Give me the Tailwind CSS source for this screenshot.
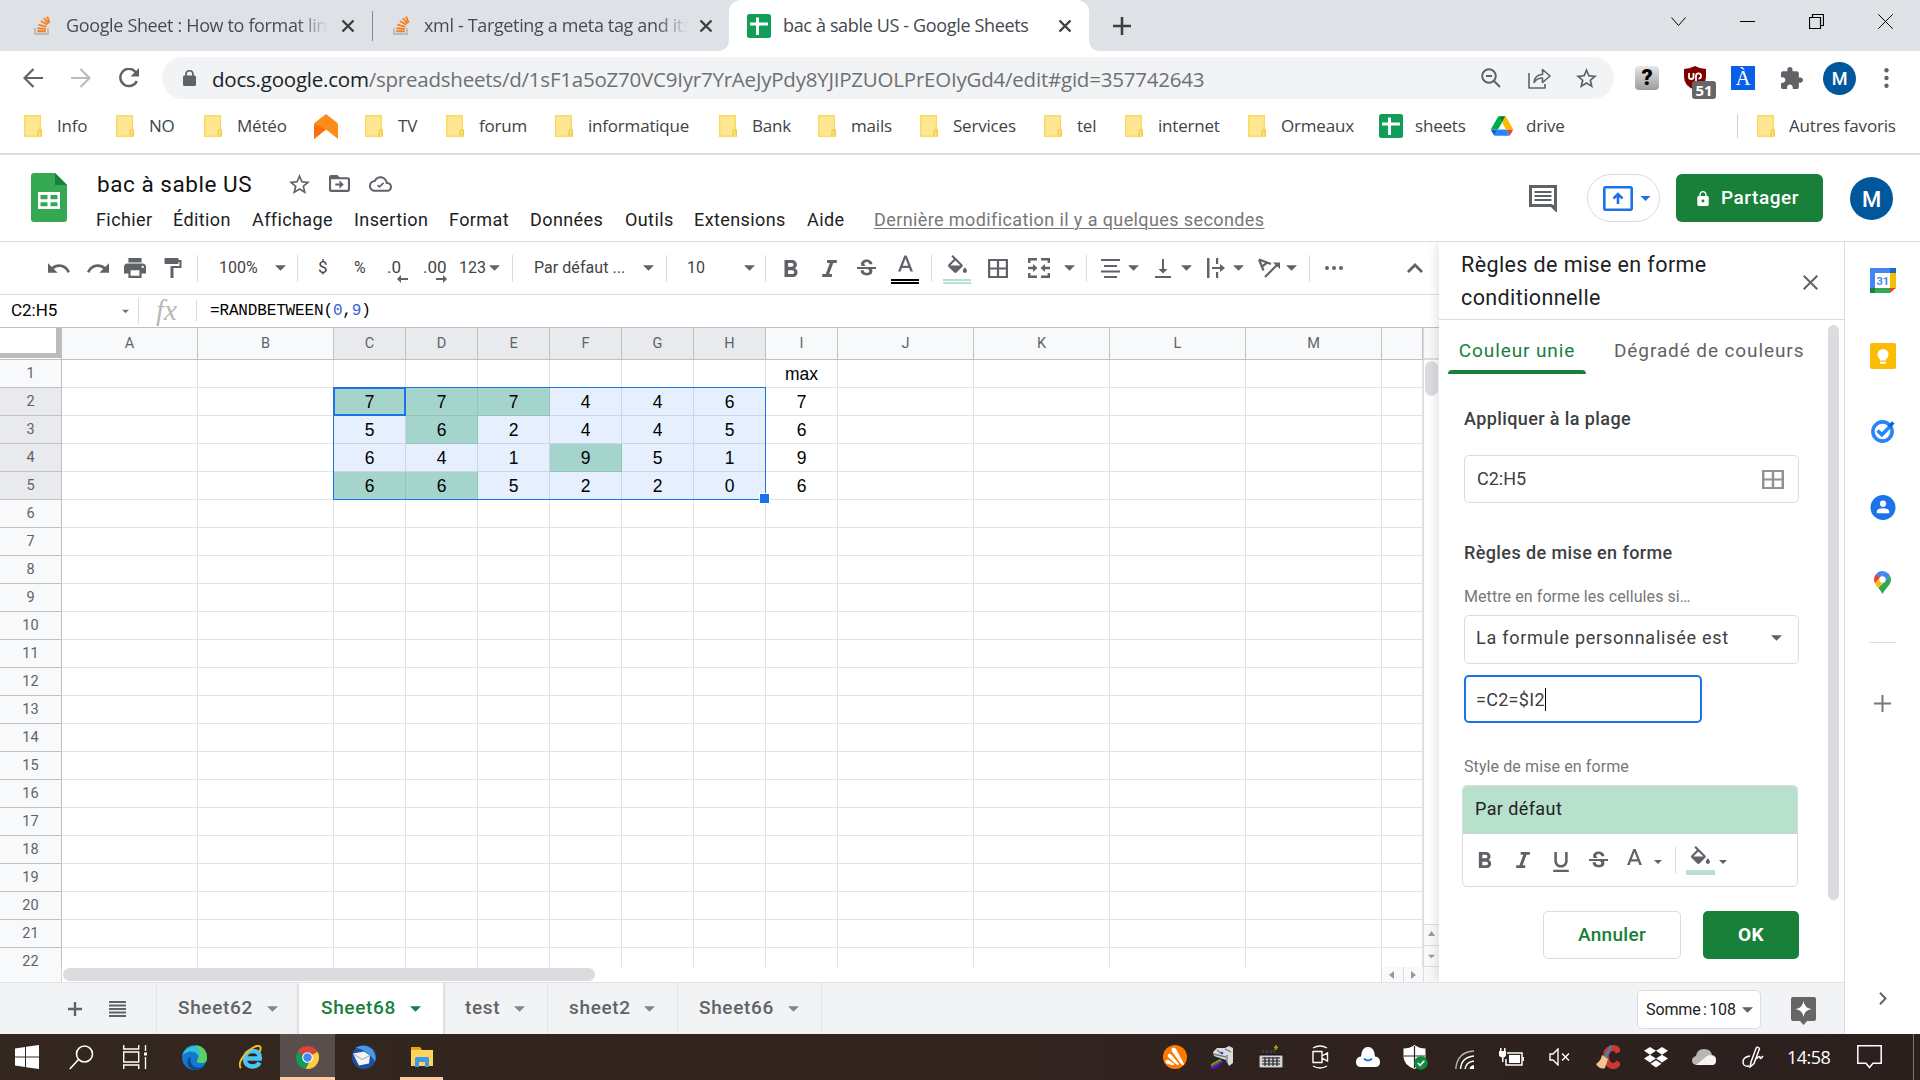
<!DOCTYPE html>
<html lang="fr">
<head>
    <meta charset="UTF-8">
    <meta name="viewport" content="width=device-width, initial-scale=1.0">
    <title>bac à sable US - Google Sheets</title>
    <script src="https://cdn.jsdelivr.net/npm/@tailwindcss/browser@4"></script>
</head>
<body class="w-[1920px] h-[1080px] overflow-hidden bg-white font-['Roboto',sans-serif] text-[#202124]">

    <!-- Shared icons -->
    <svg class="hidden">
        <symbol id="caret" viewBox="0 0 10 5"><path d="M0 0h10L5 5z"/></symbol>
        <symbol id="close" viewBox="0 0 14 14"><path d="M1.5 1.5l11 11M12.5 1.5l-11 11" fill="none" stroke="currentColor" stroke-width="2.4"/></symbol>
        <symbol id="star" viewBox="2 2 20 19"><path d="M22 9.24l-7.19-.62L12 2 9.19 8.63 2 9.24l5.46 4.73L5.82 21 12 17.27 18.18 21l-1.63-7.03L22 9.24zM12 15.4l-3.76 2.27 1-4.28-3.32-2.88 4.38-.38L12 6.1l1.71 4.04 4.38.38-3.32 2.88 1 4.28L12 15.4z"/></symbol>
        <symbol id="so" viewBox="0 0 17 19"><path d="M1 12v6h13v-6" fill="none" stroke="#bcbbbb" stroke-width="1.8"/><path d="M3.2 15.2h8.6M3.4 12.2l8.5.9M4.4 8.6l8 2.2M6.8 5l6.6 3.8M10 2.2l4.4 5.4M13.2.6l2.4 6.2" stroke="#f48024" stroke-width="1.9" fill="none"/></symbol>
        <symbol id="folder" viewBox="0 0 18 22"><path d="M.7.7h15.6v14.2h1v6.4H.7z" fill="#ffe693" stroke="#fad95f" stroke-width="1.4"/><path d="M14 21v-4.6q0-1.8 1.6-1.8t1.6 1.8V21" fill="#ffe07a" stroke="#e9c23c" stroke-width="1"/></symbol>
        <symbol id="gsheet" viewBox="0 0 24 24"><rect width="24" height="24" rx="2.5" fill="#109d58"/><path d="M10.5 3.500v17.500M3 10h18" stroke="#fff" stroke-width="3"/></symbol>
        <symbol id="bold" viewBox="7 4 10.75 14"><path d="M15.6 10.79c.97-.67 1.65-1.77 1.65-2.79 0-2.26-1.75-4-4-4H7v14h7.04c2.09 0 3.71-1.7 3.71-3.79 0-1.52-.86-2.82-2.15-3.42zM10 6.5h3c.83 0 1.5.67 1.5 1.5s-.67 1.5-1.5 1.5h-3v-3zm3.5 9H10v-3h3.5c.83 0 1.5.67 1.5 1.5s-.67 1.5-1.5 1.5z"/></symbol>
        <symbol id="italic" viewBox="6 4 12 14"><path d="M10 4v2.5h2.3L8.9 15.5H6V18h8v-2.5h-2.3l3.4-9H18V4z"/></symbol>
        <symbol id="strike" viewBox="3 3 18 16"><path d="M7.24 8.75c-.26-.48-.39-1.03-.39-1.67 0-.61.13-1.16.4-1.67.26-.5.63-.93 1.11-1.29.48-.35 1.05-.63 1.7-.83.66-.19 1.39-.29 2.18-.29.81 0 1.54.11 2.21.34.66.22 1.23.54 1.69.94.47.4.83.88 1.08 1.43.25.55.38 1.15.38 1.81h-3.01c0-.31-.05-.59-.15-.85-.09-.27-.24-.49-.44-.68-.2-.19-.45-.33-.75-.44-.3-.1-.66-.16-1.06-.16-.39 0-.74.04-1.03.13-.29.09-.53.21-.72.36-.19.16-.34.34-.44.55-.1.21-.15.43-.15.66 0 .48.25.88.74 1.21.38.25.77.48 1.41.7H7.39c-.05-.08-.11-.17-.15-.25zM21 12v-2H3v2h9.62c.18.07.4.14.55.2.37.17.66.34.87.51.21.17.35.36.43.57.07.2.11.43.11.69 0 .23-.05.45-.14.66-.09.2-.23.38-.42.53-.19.15-.42.26-.71.35-.29.08-.63.13-1.01.13-.43 0-.83-.04-1.18-.13s-.66-.23-.91-.42c-.25-.19-.45-.44-.59-.75-.14-.31-.25-.76-.25-1.21H6.4c0 .55.08 1.13.24 1.58.16.45.37.85.65 1.21.28.35.6.66.98.92.37.26.78.48 1.22.65.44.17.9.3 1.38.39.48.08.96.13 1.44.13.8 0 1.53-.09 2.18-.28s1.21-.45 1.67-.79c.46-.34.82-.77 1.07-1.27s.38-1.07.38-1.71c0-.6-.1-1.14-.31-1.61-.05-.11-.11-.23-.17-.33H21z"/></symbol>
        <symbol id="letter" viewBox="5.5 3 13 14"><path d="M11 3L5.5 17h2.25l1.12-3h6.25l1.12 3h2.25L13 3h-2zm-1.38 9L12 5.67 14.38 12H9.62z"/></symbol>
        <symbol id="fill" viewBox="3 0 18 17"><path d="M16.56 8.94L7.62 0 6.21 1.41l2.38 2.38-5.15 5.15c-.59.59-.59 1.54 0 2.12l5.5 5.5c.29.29.68.44 1.06.44s.77-.15 1.06-.44l5.5-5.5c.59-.58.59-1.53 0-2.12zM5.21 10L10 5.21 14.79 10H5.21zM19 11.5s-2 2.17-2 3.5c0 1.1.9 2 2 2s2-.9 2-2c0-1.33-2-3.5-2-3.5z"/></symbol>
        <symbol id="grid" viewBox="3 3 18 18" preserveAspectRatio="none"><path d="M3 3v18h18V3H3zm8 16H5v-6h6v6zm0-8H5V5h6v6zm8 8h-6v-6h6v6zm0-8h-6V5h6v6z"/></symbol>
    </svg>

    <!-- Tab strip -->
    <div class="flex items-center h-[51px] bg-[#dee1e6] font-['Open_Sans',sans-serif] text-[18px] tracking-[-0.35px] text-[#45494e]">
        <svg class="w-[17px] h-[19px] ml-[34px]"><use href="#so"/></svg>
        <div class="w-[262px] ml-[15px] overflow-hidden whitespace-nowrap bg-linear-to-r from-[#45494e] from-88% to-transparent bg-clip-text text-transparent">Google Sheet : How to format lin</div>
        <svg class="w-[14px] h-[14px] ml-[13px] text-[#3c4043]"><use href="#close"/></svg>
        <div class="w-px h-[30px] ml-[17px] bg-[#85888c]"></div>
        <svg class="w-[17px] h-[19px] ml-[20px]"><use href="#so"/></svg>
        <div class="w-[264px] ml-[14px] overflow-hidden whitespace-nowrap bg-linear-to-r from-[#45494e] from-88% to-transparent bg-clip-text text-transparent">xml - Targeting a meta tag and its</div>
        <svg class="w-[14px] h-[14px] ml-[11px] text-[#3c4043]"><use href="#close"/></svg>
        <svg class="w-[12px] h-[12px] ml-[4px] self-end" viewBox="0 0 12 12"><path d="M12 0v12H0Q12 12 12 0" fill="#fff"/></svg>
        <div class="flex items-center w-[360px] h-full bg-white rounded-t-xl">
            <svg class="w-[24px] h-[24px] ml-[18px]"><use href="#gsheet"/></svg>
            <div class="w-[264px] ml-[12px] whitespace-nowrap">bac à sable US - Google Sheets</div>
            <svg class="w-[14px] h-[14px] ml-[11px] text-[#3c4043]"><use href="#close"/></svg>
        </div>
        <svg class="w-[12px] h-[12px] self-end" viewBox="0 0 12 12"><path d="M0 0v12h12Q0 12 0 0" fill="#fff"/></svg>
        <svg class="w-[18px] h-[18px] ml-[12px]" viewBox="0 0 18 18"><path d="M9 0v18M0 9h18" stroke="#3c4043" stroke-width="2.6"/></svg>
        <div class="flex items-center justify-between w-[222px] h-[16px] ml-auto mr-[27px] mb-[8px]">
            <svg class="w-[15px] h-[9px]" viewBox="0 0 15 9"><path d="M.5.5l7 8 7-8" fill="none" stroke="#000"/></svg>
            <div class="w-[15px] h-px bg-black"></div>
            <svg class="w-[15px] h-[15px]" viewBox="0 0 15 15"><path d="M.5 3.5h11v11h-11zM3.5 3V.5h11v11h-3" fill="none" stroke="#000" stroke-width="1.2"/></svg>
            <svg class="w-[15px] h-[15px]" viewBox="0 0 15 15"><path d="M.3.3l14.4 14.4M14.7.3L.3 14.7" stroke="#000"/></svg>
        </div>
    </div>

    <!-- Address bar -->
    <div class="flex items-center h-[54px] bg-white">
        <svg class="w-[20px] h-[20px] ml-[23px]" viewBox="0 0 20 20"><path d="M20 10H2M10.5 1L1.5 10l9 9" fill="none" stroke="#5f6368" stroke-width="2.2"/></svg>
        <svg class="w-[20px] h-[20px] ml-[28px]" viewBox="0 0 20 20"><path d="M0 10h18M9.5 1l9 9-9 9" fill="none" stroke="#babcbe" stroke-width="2.2"/></svg>
        <svg class="w-[22px] h-[20px] ml-[27px]" viewBox="0 0 22 20"><path d="M17.6 4A8.6 8.6 0 1 0 18.8 13" fill="none" stroke="#5f6368" stroke-width="2.5"/><path d="M21 0v8.5h-8.5z" fill="#5f6368"/></svg>
        <div class="flex items-center w-[1452px] h-[42px] ml-[22px] bg-[#f1f3f4] rounded-full">
            <svg class="w-[13px] h-[16px] ml-[21px]" viewBox="0 0 13 16" fill="#5f6368"><path d="M0 7q0-1.5 1.5-1.5h10Q13 5.5 13 7v7.5q0 1.5-1.5 1.5h-10Q0 16 0 14.5z"/><path d="M3 6.5V4.2a3.5 3.5 0 0 1 7 0v2.3" fill="none" stroke="#5f6368" stroke-width="1.8"/></svg>
            <div class="w-[1250px] ml-[16px] mt-[2px] whitespace-nowrap font-['Open_Sans',sans-serif] text-[20.5px] tracking-[-0.22px] text-[#6c7075]"><span class="text-[#202124]">docs.google.com</span>/spreadsheets/d/1sF1a5oZ70VC9Iyr7YrAeJyPdy8YJIPZUOLPrEOIyGd4/edit#gid=357742643</div>
            <svg class="w-[20px] h-[20px] ml-[19px]" viewBox="0 0 20 20"><circle cx="8" cy="8" r="6.8" fill="none" stroke="#5f6368" stroke-width="2"/><path d="M12.8 12.8L19 19M5 8h6" stroke="#5f6368" stroke-width="2"/></svg>
            <svg class="w-[23px] h-[21px] ml-[27px]" viewBox="0 0 23 21"><path d="M1 5v15h16v-4M6 14.5Q7 6.5 14.5 6.5V1.5L22 8l-7.5 6.500V10Q9 10 6 14.5z" fill="none" stroke="#5f6368" stroke-width="1.6" stroke-linejoin="round"/></svg>
            <svg class="w-[21px] h-[20px] ml-[25px]" fill="#5f6368"><use href="#star"/></svg>
        </div>
        <div class="flex items-center justify-center w-[24px] h-[24px] ml-[21px] rounded bg-linear-to-b from-[#e8e8e8] to-[#9c9c9c] text-[22px] font-black leading-none text-black">?</div>
        <div class="relative w-[32px] h-[24px] ml-[25px]">
            <svg class="w-[22px] h-[24px]" viewBox="0 0 22 24"><path d="M11 0q5 2.8 11 3v8q0 9-11 13Q0 20 0 11V3q6-.2 11-3z" fill="#800000"/><path d="M5 7v4q0 2 2.2 2T9.500 11V7M12 16V10q0-2.600 2.500-2.600T17 10t-2.500 2.600" fill="none" stroke="#fff" stroke-width="1.8"/></svg>
            <div class="absolute left-[8px] top-[15px] w-[24px] h-[18px] rounded-[3px] bg-[#666] text-center text-[15px] font-bold leading-[19px] text-white font-['Open_Sans',sans-serif]">51</div>
        </div>
        <div class="w-[24px] h-[24px] ml-[15px] bg-[#0a5fe8] text-center text-[21px] leading-[25px] text-white font-['Liberation_Serif',serif]">À</div>
        <svg class="w-[22px] h-[22px] ml-[26px]" viewBox="2 1 21 21" fill="#5f6368"><path d="M20.5 11H19V7c0-1.1-.9-2-2-2h-4V3.5C13 2.12 11.88 1 10.5 1S8 2.12 8 3.5V5H4c-1.1 0-1.990.9-1.990 2v3.8H3.5c1.49 0 2.7 1.21 2.7 2.7s-1.21 2.7-2.7 2.7H2V20c0 1.1.9 2 2 2h3.8v-1.5c0-1.49 1.21-2.7 2.7-2.7 1.49 0 2.7 1.21 2.7 2.7V22H17c1.1 0 2-.9 2-2v-4h1.5c1.38 0 2.5-1.12 2.5-2.5S21.88 11 20.5 11z"/></svg>
        <div class="flex items-center justify-center w-[33px] h-[33px] ml-[20px] rounded-full bg-[#01579b] text-[18px] font-medium text-white">M</div>
        <svg class="w-[5px] h-[20px] ml-[28px]" viewBox="0 0 5 20" fill="#5f6368"><circle cx="2.5" cy="2.3" r="2.2"/><circle cx="2.5" cy="10" r="2.2"/><circle cx="2.5" cy="17.7" r="2.2"/></svg>
    </div>

    <!-- Bookmarks -->
    <div class="flex items-center h-[50px] pl-[24px] pb-[6px] border-b-2 border-[#dadce0] font-['Open_Sans',sans-serif] text-[17px] tracking-[-0.2px] text-[#3f4347]">
        <div class="flex items-center gap-[15px] w-[92px]"><svg class="w-[18px] h-[22px]"><use href="#folder"/></svg>Info</div>
        <div class="flex items-center gap-[15px] w-[88px]"><svg class="w-[18px] h-[22px]"><use href="#folder"/></svg>NO</div>
        <div class="flex items-center gap-[15px] w-[110px]"><svg class="w-[18px] h-[22px]"><use href="#folder"/></svg>Météo</div>
        <div class="w-[51px]"><svg class="w-[24px] h-[25px]" viewBox="0 0 24 25"><path d="M12 0l11 8.5q1 1 1 3V25L12 15.5 0 25V11.5q0-2 1-3z" fill="#ff8c1a"/><path d="M0 10v15l12-9.5z" fill="#ff6f0f"/></svg></div>
        <div class="flex items-center gap-[15px] w-[81px]"><svg class="w-[18px] h-[22px]"><use href="#folder"/></svg>TV</div>
        <div class="flex items-center gap-[15px] w-[109px]"><svg class="w-[18px] h-[22px]"><use href="#folder"/></svg>forum</div>
        <div class="flex items-center gap-[15px] w-[164px]"><svg class="w-[18px] h-[22px]"><use href="#folder"/></svg>informatique</div>
        <div class="flex items-center gap-[15px] w-[99px]"><svg class="w-[18px] h-[22px]"><use href="#folder"/></svg>Bank</div>
        <div class="flex items-center gap-[15px] w-[102px]"><svg class="w-[18px] h-[22px]"><use href="#folder"/></svg>mails</div>
        <div class="flex items-center gap-[15px] w-[124px]"><svg class="w-[18px] h-[22px]"><use href="#folder"/></svg>Services</div>
        <div class="flex items-center gap-[15px] w-[81px]"><svg class="w-[18px] h-[22px]"><use href="#folder"/></svg>tel</div>
        <div class="flex items-center gap-[15px] w-[123px]"><svg class="w-[18px] h-[22px]"><use href="#folder"/></svg>internet</div>
        <div class="flex items-center gap-[15px] w-[131px]"><svg class="w-[18px] h-[22px]"><use href="#folder"/></svg>Ormeaux</div>
        <div class="flex items-center gap-[12px] w-[112px]"><svg class="w-[24px] h-[24px]"><use href="#gsheet"/></svg>sheets</div>
        <div class="flex items-center gap-[13px]">
            <svg class="w-[22px] h-[20px]" viewBox="0 0 87.3 78"><path d="M6.6 66.85l3.85 6.65c.8 1.4 1.95 2.5 3.3 3.3l13.75-23.8H0c0 1.55.4 3.1 1.2 4.5z" fill="#0066da"/><path d="M43.65 25L29.9 1.2c-1.35.8-2.5 1.9-3.3 3.3L1.2 48.5A9 9 0 0 0 0 53h27.5z" fill="#00ac47"/><path d="M73.55 76.8c1.35-.8 2.5-1.9 3.3-3.3l9.25-16c.8-1.4 1.2-2.95 1.2-4.5H59.8z" fill="#ea4335"/><path d="M43.65 25L57.4 1.2C56.05.4 54.5 0 52.9 0H34.4c-1.6 0-3.15.45-4.5 1.2z" fill="#00832d"/><path d="M59.8 53H27.5L13.75 76.8c1.35.8 2.9 1.2 4.5 1.2h50.8c1.6 0 3.15-.45 4.5-1.2z" fill="#2684fc"/><path d="M73.4 26.5L60.7 4.5c-.8-1.4-1.95-2.5-3.3-3.3L43.65 25 59.8 53h27.45c0-1.55-.4-3.1-1.2-4.5z" fill="#ffba00"/></svg>drive
        </div>
        <div class="w-px h-[24px] ml-auto bg-[#cfd1d4]"></div>
        <div class="flex items-center gap-[14px] w-[163px] ml-[19px] whitespace-nowrap"><svg class="w-[18px] h-[22px]"><use href="#folder"/></svg>Autres favoris</div>
    </div>

    <!-- Document header -->
    <div class="flex h-[87px] border-b border-[#dadce0]">
        <svg class="w-[36px] h-[49px] ml-[31px] mt-[18px]" viewBox="0 0 36 49"><path d="M3 0h21l12 12v34q0 3-3 3H3q-3 0-3-3V3Q0 0 3 0z" fill="#34a853"/><path d="M24 0l12 12H24z" fill="#188038"/><path d="M7 19h22v17H7zM9.5 22v4.2h7V22zM19.5 22v4.2h7V22zM9.5 29.2v4h7v-4zM19.5 29.2v4h7v-4z" fill="#fff" fill-rule="evenodd"/></svg>
        <div class="ml-[29px]">
            <div class="flex items-center h-[26px] mt-[16px] fill-[#5f6368]">
                <div class="w-[193px] pl-[1px] pt-px text-[22.5px] tracking-[0.55px] leading-none text-[#111]">bac à sable US</div>
                <svg class="w-[21px] h-[20px] mb-px"><use href="#star"/></svg>
                <svg class="w-[21px] h-[17px] ml-[19px] mb-px" viewBox="2 4 20 16"><path d="M20 6h-8l-2-2H4c-1.1 0-2 .9-2 2v12c0 1.1.9 2 2 2h16c1.1 0 2-.9 2-2V8c0-1.1-.9-2-2-2zm0 12H4V8h16v10zM12 17l4-4-4-4v3H8v2h4v3z"/></svg>
                <svg class="w-[23px] h-[16px] ml-[19px] mb-px" viewBox="0 4 24 16"><path d="M19.35 10.04C18.67 6.59 15.64 4 12 4 9.11 4 6.6 5.64 5.35 8.04 2.34 8.36 0 10.91 0 14c0 3.31 2.69 6 6 6h13c2.76 0 5-2.24 5-5 0-2.64-2.05-4.78-4.65-4.96zM19 18H6c-2.21 0-4-1.79-4-4 0-2.05 1.53-3.76 3.56-3.97l1.07-.11.5-.95C8.08 7.14 9.94 6 12 6c2.62 0 4.88 1.86 5.39 4.43l.3 1.5 1.53.11c1.56.1 2.78 1.41 2.78 2.96 0 1.65-1.35 3-3 3z"/><path d="M11 16.3l-2.7-2.7 1.2-1.2 1.5 1.5 3.6-3.6 1.2 1.2z"/></svg>
            </div>
            <div class="flex mt-[11px] text-[18px] tracking-[0.4px] leading-[24px] whitespace-nowrap">
                <div class="w-[77px]">Fichier</div>
                <div class="w-[79px]">Édition</div>
                <div class="w-[102px]">Affichage</div>
                <div class="w-[95px]">Insertion</div>
                <div class="w-[81px]">Format</div>
                <div class="w-[95px]">Données</div>
                <div class="w-[69px]">Outils</div>
                <div class="w-[113px]">Extensions</div>
                <div class="w-[67px]">Aide</div>
                <div class="text-[#777] underline decoration-1 underline-offset-2">Dernière modification il y a quelques secondes</div>
            </div>
        </div>
        <div class="flex items-center h-[48px] ml-auto mt-[19px] mr-[27px]">
            <svg class="w-[28px] h-[27px]" viewBox="0 0 28 27"><path d="M1.5 1.5h25v23l-4-4h-21z" fill="none" stroke="#5f6368" stroke-width="3"/><path d="M5.5 7h17M5.5 11h17M5.5 15h17" stroke="#5f6368" stroke-width="2"/><path d="M21 20h7v7z" fill="#5f6368"/></svg>
            <div class="flex items-center w-[73px] h-[48px] ml-[30px] border border-[#dadce0] rounded-full">
                <svg class="w-[30px] h-[25px] ml-[15px]" viewBox="0 0 30 25"><rect x="1.3" y="1.3" width="27.4" height="22.4" rx="1.5" fill="none" stroke="#1a73e8" stroke-width="2.6"/><path d="M15 18V8.5M10.5 12.5L15 8l4.5 4.5" fill="none" stroke="#1a73e8" stroke-width="2.6"/></svg>
                <svg class="w-[11px] h-[5px] ml-[7px] fill-[#1a73e8]"><use href="#caret"/></svg>
            </div>
            <div class="flex items-center w-[147px] h-[48px] ml-[16px] rounded-md bg-[#188038] text-white">
                <svg class="w-[12px] h-[15px] ml-[21px]" viewBox="4 1 16 21" fill="#fff"><path d="M18 8h-1V6c0-2.76-2.24-5-5-5S7 3.24 7 6v2H6c-1.1 0-2 .9-2 2v10c0 1.1.9 2 2 2h12c1.1 0 2-.9 2-2V10c0-1.1-.9-2-2-2zm-6 9c-1.1 0-2-.9-2-2s.9-2 2-2 2 .9 2 2-.9 2-2 2zm3.1-9H8.9V6c0-1.71 1.39-3.1 3.1-3.1 1.71 0 3.1 1.39 3.1 3.1v2z"/></svg>
                <div class="ml-[12px] text-[19px] font-medium tracking-[0.55px]">Partager</div>
            </div>
            <div class="flex items-center justify-center w-[43px] h-[43px] ml-[27px] rounded-full bg-[#01579b] pt-[3px] text-[22px] font-medium text-white">M</div>
        </div>
    </div>

    <div class="flex h-[792px]">
        <div class="w-[1844px]">
            <div class="flex h-[740px]">

                <!-- Sheet -->
                <div class="w-[1439px]">
                    <!-- Toolbar -->
                    <div class="flex items-center h-[53px] pl-[48px] border-b border-[#dadce0] text-[16px] text-[#444] fill-[#5f6368] stroke-none whitespace-nowrap">
                        <div class="w-[39px]"><svg class="w-[22px] h-[10px]" viewBox="2 7 20.5 9"><path d="M12.5 8c-2.65 0-5.05.99-6.9 2.6L2 7v9h9l-3.62-3.62c1.39-1.16 3.16-1.88 5.12-1.88 3.54 0 6.55 2.31 7.6 5.5l2.37-.78C21.08 11.03 17.15 8 12.5 8z"/></svg></div>
                        <div class="w-[37px]"><svg class="w-[22px] h-[10px]" viewBox="1.5 7 20.5 9"><path d="M18.4 10.6C16.55 8.99 14.15 8 11.5 8c-4.65 0-8.58 3.03-9.96 7.22L3.9 16c1.05-3.19 4.05-5.5 7.6-5.5 1.95 0 3.73.72 5.12 1.88L13 16h9V7l-3.6 3.6z"/></svg></div>
                        <div class="w-[40px]"><svg class="w-[22px] h-[20px]" viewBox="2 3 20 18"><path d="M19 8H5c-1.66 0-3 1.34-3 3v6h4v4h12v-4h4v-6c0-1.66-1.34-3-3-3zm-3 11H8v-5h8v5zm3-7c-.55 0-1-.45-1-1s.45-1 1-1 1 .45 1 1-.45 1-1 1zm-1-9H6v4h12V3z"/></svg></div>
                        <div class="w-[33px]"><svg class="w-[18px] h-[20px]" viewBox="4 2 17 20"><path d="M18 4V3c0-.55-.45-1-1-1H5c-.55 0-1 .45-1 1v4c0 .55.45 1 1 1h12c.55 0 1-.45 1-1V6h1v4H10v11c0 .55 0 1 0 1h3c0 0 0-.45 0-1v-9h8V4h-3z"/></svg></div>
                        <div class="w-[22px]"><div class="w-px h-[27px] bg-[#dadce0]"></div></div>
                        <div class="w-[56px]">100%</div>
                        <div class="w-[22px]"><svg class="w-[11px] h-[6px]"><use href="#caret"/></svg></div>
                        <div class="w-[21px]"><div class="w-px h-[27px] bg-[#dadce0]"></div></div>
                        <div class="w-[36px] text-[17px]">$</div>
                        <div class="w-[33px]">%</div>
                        <div class="relative w-[36px] text-[17px]">.0<svg class="absolute left-[10px] top-[20px] w-[11px] h-[8px]" viewBox="0 0 11 8"><path d="M4 0v3h7v2H4v3L0 4z"/></svg></div>
                        <div class="relative w-[36px] text-[17px]">.00<svg class="absolute left-[13px] top-[20px] w-[11px] h-[8px]" viewBox="0 0 11 8"><path d="M7 0v3H0v2h7v3l4-4z"/></svg></div>
                        <div class="w-[30px]">123</div>
                        <div class="w-[23px]"><svg class="w-[11px] h-[6px]"><use href="#caret"/></svg></div>
                        <div class="w-[22px]"><div class="w-px h-[27px] bg-[#dadce0]"></div></div>
                        <div class="w-[109px] tracking-[0.05px]">Par défaut ...</div>
                        <div class="w-[23px]"><svg class="w-[11px] h-[6px]"><use href="#caret"/></svg></div>
                        <div class="w-[21px]"><div class="w-px h-[27px] bg-[#dadce0]"></div></div>
                        <div class="w-[57px]">10</div>
                        <div class="w-[21px]"><svg class="w-[11px] h-[6px]"><use href="#caret"/></svg></div>
                        <div class="w-[19px]"><div class="w-px h-[27px] bg-[#dadce0]"></div></div>
                        <div class="w-[37px]"><svg class="w-[14px] h-[17px]"><use href="#bold"/></svg></div>
                        <div class="w-[36px]"><svg class="w-[17px] h-[17px]"><use href="#italic"/></svg></div>
                        <div class="w-[34px]"><svg class="w-[19px] h-[18px]"><use href="#strike"/></svg></div>
                        <div class="flex flex-col items-center w-[28px] mr-[12px] pt-[2px]">
                            <svg class="w-[15px] h-[17px]"><use href="#letter"/></svg>
                            <div class="w-[28px] h-[5px] mt-[7px] border-y-2 border-black"></div>
                        </div>
                        <div class="w-[12px]"><div class="w-px h-[27px] bg-[#dadce0]"></div></div>
                        <div class="flex flex-col items-center w-[28px] mr-[17px] pt-[2px]">
                            <svg class="w-[19px] h-[18px]"><use href="#fill"/></svg>
                            <div class="w-[28px] h-[5px] mt-[6px] border-y-2 border-[#b7e1cd]"></div>
                        </div>
                        <div class="w-[40px]"><svg class="w-[20px] h-[19px]"><use href="#grid"/></svg></div>
                        <div class="w-[36px]"><svg class="w-[22px] h-[20px]" viewBox="0 0 22 20"><path d="M1.2 5V1.2H9M13 1.2h7.8V5M1.2 15v3.8H9M13 18.8h7.8V15M0 10h6M22 10h-6" fill="none" stroke="#5f6368" stroke-width="2.4"/><path d="M5 6l4.5 4L5 14zM17 6l-4.5 4 4.5 4z"/></svg></div>
                        <div class="w-[22px]"><svg class="w-[11px] h-[6px]"><use href="#caret"/></svg></div>
                        <div class="w-[15px]"><div class="w-px h-[27px] bg-[#dadce0]"></div></div>
                        <div class="w-[27px]"><svg class="w-[19px] h-[19px]" viewBox="0 0 19 19"><path d="M0 0h19v2H0zM3 6h13v2H3zM0 11.5h19v2H0zM3 17h13v2H3z"/></svg></div>
                        <div class="w-[27px]"><svg class="w-[11px] h-[6px]"><use href="#caret"/></svg></div>
                        <div class="w-[26px]"><svg class="w-[16px] h-[19px]" viewBox="0 0 16 19"><path d="M0 17h16v2H0zM7 0h2v10h3.5L8 14.5 3.5 10H7z"/></svg></div>
                        <div class="w-[26px]"><svg class="w-[11px] h-[6px]"><use href="#caret"/></svg></div>
                        <div class="w-[26px]"><svg class="w-[18px] h-[20px]" viewBox="0 0 18 20"><path d="M0 0h2.5v20H0zM9 0h2.2v6H9zM9 14h2.2v6H9zM5 9h8V6l5 4-5 4v-3H5z"/></svg></div>
                        <div class="w-[25px]"><svg class="w-[11px] h-[6px]"><use href="#caret"/></svg></div>
                        <div class="w-[28px]"><svg class="w-[22px] h-[20px]" viewBox="0 0 22 20"><path d="M1 1.5l4.5 11M1 1.5l12 4.5M3.600 8.8l6-4.5M7 19L19 7" fill="none" stroke="#5f6368" stroke-width="2.2"/><path d="M15 4.5h7V11z"/></svg></div>
                        <div class="w-[23px]"><svg class="w-[11px] h-[6px]"><use href="#caret"/></svg></div>
                        <div class="w-[16px]"><div class="w-px h-[27px] bg-[#dadce0]"></div></div>
                        <div class="w-[82px]"><svg class="w-[18px] h-[4px]" viewBox="0 0 18 4"><circle cx="2" cy="2" r="2"/><circle cx="9" cy="2" r="2"/><circle cx="16" cy="2" r="2"/></svg></div>
                        <svg class="w-[16px] h-[10px]" viewBox="0 0 16 10"><path d="M1 9l7-7 7 7" fill="none" stroke="#5f6368" stroke-width="2.8"/></svg>
                    </div>

                    <!-- Formula bar -->
                    <div class="flex items-center h-[33px] border-b border-[#c0c0c0]">
                        <div class="w-[111px] pl-[11px] text-[17px] text-black">C2:H5</div>
                        <svg class="w-[7px] h-[5px] ml-[11px] fill-[#777]"><use href="#caret"/></svg>
                        <div class="w-px h-[26px] ml-[9px] bg-[#dadce0]"></div>
                        <div class="w-[40px] ml-[17px] pb-[3px] text-[29px] italic leading-[30px] text-[#b8b8b8] font-['Liberation_Serif',serif]">fx</div>
                        <div class="w-px h-[22px] bg-[#dadce0]"></div>
                        <div class="ml-[13px] text-[16px] tracking-[-0.15px] text-black font-['Liberation_Mono',monospace]">=RANDBETWEEN(<span class="text-[#3a5fd9]">0</span>,<span class="text-[#3a5fd9]">9</span>)</div>
                    </div>

                    <div class="flex h-[654px]">
                        <div class="w-[1423px]">
                            <!-- Cells -->
                            <div class="relative h-[639px] overflow-hidden">
                                <div id="colHeads" class="flex h-[32px]"></div>
                                <div id="rows"></div>
                                <div class="absolute left-[333px] top-[59px] w-[433px] h-[113px] border border-[#1a73e8]"></div>
                                <div class="absolute left-[333px] top-[59px] w-[73px] h-[29px] border-2 border-[#1a73e8]"></div>
                                <div class="absolute left-[759px] top-[165px] w-[11px] h-[11px] bg-[#1a73e8] border border-white"></div>
                            </div>
                            <!-- Horizontal scrollbar -->
                            <div class="flex h-[15px]">
                                <div class="w-[62px] bg-[#f8f9fa] border-r border-[#d5d5d5]"></div>
                                <div class="w-[532px] h-[13px] mt-px ml-px rounded-full bg-[#dadce0]"></div>
                                <div class="flex items-center justify-center w-[22px] ml-auto pr-[3px] bg-[#f8f9fa] border-l border-[#dadce0]"><svg class="w-[5px] h-[8px]" viewBox="0 0 5 8"><path d="M5 0v8L0 4z" fill="#999"/></svg></div>
                                <div class="flex items-center justify-center w-[20px] bg-[#f8f9fa] border-l border-[#dadce0]"><svg class="w-[5px] h-[8px]" viewBox="0 0 5 8"><path d="M0 0v8l5-4z" fill="#999"/></svg></div>
                            </div>
                        </div>
                        <!-- Vertical scrollbar -->
                        <div class="flex flex-col w-[16px] border-l border-[#dadce0]">
                            <div class="h-[32px] bg-[#f8f8f8] border-b-2 border-[#dadce0]"></div>
                            <div class="w-[13px] h-[35px] ml-px mt-px rounded-full bg-[#dadce0]"></div>
                            <div class="flex items-center justify-center h-[21px] mt-auto pb-[3px] bg-[#f8f9fa] border-t border-[#dadce0]"><svg class="w-[7px] h-[5px]" viewBox="0 0 7 5"><path d="M0 5h7L3.5 0z" fill="#999"/></svg></div>
                            <div class="flex items-center justify-center h-[21px] bg-[#f8f9fa] border-t border-[#dadce0]"><svg class="w-[7px] h-[5px]" fill="#999"><use href="#caret"/></svg></div>
                            <div class="h-[16px] bg-[#f8f8f8] border-t border-[#dadce0]"></div>
                        </div>
                    </div>
                </div>

                <!-- Conditional formatting panel -->
                <div class="relative w-[405px] bg-white shadow-[-1px_0_10px_rgba(60,64,67,0.18)] [clip-path:inset(0_0_0_-12px)]">
                    <div class="flex items-center h-[78px] pl-[22px] border-b border-[#dadce0]">
                        <div class="w-[342px] text-[21.5px] tracking-[0.4px] leading-[33px]">Règles de mise en forme<br>conditionnelle</div>
                        <svg class="w-[15px] h-[15px] mt-[3px]" viewBox="0 0 15 15"><path d="M.7.7l13.6 13.6M14.3.7L.7 14.3" stroke="#5f6368" stroke-width="2"/></svg>
                    </div>
                    <div class="flex pl-[9px] h-[54px] pt-[8px] text-[19px] tracking-[0.9px] text-[#5f6368] whitespace-nowrap">
                        <div class="flex items-center justify-center w-[138px] text-[#188038]"><span>Couleur unie</span></div>
                        <div class="flex items-center ml-[28px]">Dégradé de couleurs</div>
                    </div>
                    <div class="w-[138px] h-[4px] -mt-[4px] ml-[9px] rounded-t bg-[#188038]"></div>

                    <div class="pl-[25px] w-[360px]">
                        <div class="h-[24px] mt-[33px] text-[18px] font-medium leading-[24px] tracking-[0.4px] text-[#3c4043]">Appliquer à la plage</div>
                        <div class="flex items-center justify-between w-[335px] h-[48px] mt-[24px] pl-[12px] pr-[14px] border border-[#dadce0] rounded-[5px] text-[18px] text-[#3c4043]"><span class="pb-[2px]">C2:H5</span><svg class="w-[22px] h-[19px] fill-[#8f9296]"><use href="#grid"/></svg></div>
                        <div class="h-[24px] mt-[38px] text-[18px] font-medium leading-[24px] tracking-[0.4px] text-[#3c4043]">Règles de mise en forme</div>
                        <div class="h-[20px] mt-[22px] text-[16px] leading-[20px] tracking-[0.08px] text-[#777]">Mettre en forme les cellules si…</div>
                        <div class="flex items-center justify-between w-[335px] h-[49px] mt-[8px] pl-[11px] pr-[16px] pb-[3px] border border-[#dadce0] rounded-[5px] text-[18px] tracking-[0.75px] text-[#3c4043]"><span class="pb-[2px]">La formule personnalisée est</span><svg class="w-[11px] h-[6px] fill-[#5f6368]"><use href="#caret"/></svg></div>
                        <div class="flex items-center w-[238px] h-[48px] mt-[11px] pl-[10px] border-2 border-[#1a73e8] rounded-[5px] text-[18px] tracking-[0.3px] text-[#3c4043]">=C2=$I2<div class="w-px h-[23px] bg-black"></div></div>
                        <div class="h-[20px] mt-[34px] text-[16px] leading-[20px] tracking-[0.1px] text-[#777]">Style de mise en forme</div>
                    </div>
                    <div class="w-[336px] h-[102px] mt-[8px] ml-[23px] border border-[#dadce0] rounded-[5px] overflow-hidden">
                        <div class="h-[48px] pl-[12px] text-[18px] leading-[46px] tracking-[0.4px] bg-[#b7e1cd] border-b border-[#c5d5cc]">Par défaut</div>
                        <div class="flex items-center h-[52px] pl-[15px] fill-[#5f6368]">
                            <div class="w-[37px]"><svg class="w-[14px] h-[16px]"><use href="#bold"/></svg></div>
                            <div class="w-[38px]"><svg class="w-[16px] h-[16px]"><use href="#italic"/></svg></div>
                            <div class="w-[36px]"><svg class="w-[16px] h-[20px] mt-[3px]" viewBox="5 3 14 18"><path d="M12 17c3.31 0 6-2.69 6-6V3h-2.3v8c0 2-1.6 3.7-3.7 3.7S8.3 13 8.3 11V3H6v8c0 3.31 2.69 6 6 6zm-7 2v2h14v-2H5z"/></svg></div>
                            <div class="w-[38px]"><svg class="w-[19px] h-[18px]"><use href="#strike"/></svg></div>
                            <div class="w-[27px] pb-[7px]"><svg class="w-[15px] h-[16px]"><use href="#letter"/></svg></div>
                            <div class="w-[21px] pt-[4px]"><svg class="w-[8px] h-[4px]"><use href="#caret"/></svg></div>
                            <div class="w-[11px]"><div class="w-px h-[27px] bg-[#dadce0]"></div></div>
                            <div class="flex flex-col items-center w-[29px] mr-[4px]"><svg class="w-[19px] h-[18px]"><use href="#fill"/></svg><div class="w-[29px] h-[5px] mt-[6px] bg-[#b7e1cd]"></div></div>
                            <div class="pt-[4px]"><svg class="w-[8px] h-[4px]"><use href="#caret"/></svg></div>
                        </div>
                    </div>
                    <div class="flex justify-end gap-[22px] mt-[24px] pr-[45px] text-[19px] font-medium tracking-[0.3px]">
                        <div class="flex items-center justify-center w-[138px] h-[48px] border border-[#dadce0] rounded-[5px] text-[#188038]">Annuler</div>
                        <div class="flex items-center justify-center w-[96px] h-[48px] rounded-[5px] bg-[#188038] text-white font-bold">OK</div>
                    </div>
                    <div class="absolute left-[389px] top-[83px] w-[11px] h-[575px] rounded-full bg-[#dadce0]"></div>
                </div>
            </div>

            <!-- Sheet tabs -->
            <div class="relative flex items-center h-[52px] bg-[#f1f3f4] border-t border-[#e0e2e5] text-[19px] font-medium tracking-[0.65px] text-[#5f6368]">
                <svg class="w-[14px] h-[14px] ml-[68px]" viewBox="0 0 14 14"><path d="M7 0v14M0 7h14" stroke="#5f6368" stroke-width="2.4"/></svg>
                <svg class="w-[17px] h-[16px] ml-[27px]" viewBox="0 0 17 16" fill="#5f6368"><path d="M0 0h17v2H0zM0 3.5h17v2H0zM0 7h17v2H0zM0 10.5h17v2H0zM0 14h17v2H0z"/></svg>
                <div class="flex items-center w-[143px] h-full ml-[30px] pl-[21px] border-l border-[#e3e5e8]"><div class="w-[89px]">Sheet62</div><svg class="w-[11px] h-[6px] fill-[#80868b]"><use href="#caret"/></svg></div>
                <div class="flex items-center w-[144px] h-full pl-[22px] bg-white text-[#188038] shadow-[0_1px_3px_1px_rgba(60,64,67,0.2)] [clip-path:inset(0_-4px)]"><div class="w-[89px]">Sheet68</div><svg class="w-[11px] h-[6px] fill-[#188038]"><use href="#caret"/></svg></div>
                <div class="flex items-center w-[104px] h-full pl-[22px]"><div class="w-[49px]">test</div><svg class="w-[11px] h-[6px] fill-[#80868b]"><use href="#caret"/></svg></div>
                <div class="flex items-center w-[130px] h-full pl-[21px] border-l border-[#e3e5e8]"><div class="w-[75px]">sheet2</div><svg class="w-[11px] h-[6px] fill-[#80868b]"><use href="#caret"/></svg></div>
                <div class="flex items-center w-[145px] h-full pl-[21px] border-x border-[#e3e5e8]"><div class="w-[89px]">Sheet66</div><svg class="w-[11px] h-[6px] fill-[#80868b]"><use href="#caret"/></svg></div>
                <div class="flex items-center justify-between w-[124px] h-[39px] ml-auto mt-[2px] pl-[8px] pr-[7px] border border-[#dadce0] rounded-[5px] bg-white text-[16px] font-normal tracking-[-0.1px] text-[#202124]"><span class="pt-px [word-spacing:-1.5px]">Somme : 108</span><svg class="w-[11px] h-[6px] fill-[#5f6368]"><use href="#caret"/></svg></div>
                <svg class="w-[25px] h-[28px] ml-[30px] mr-[28px] mt-[4px]" viewBox="0 0 25 28"><path d="M2 0h21q2 0 2 2v20q0 2-2 2h-7l-3.5 4L9 24H2q-2 0-2-2V2Q0 0 2 0z" fill="#666"/><path d="M12.5 4q1 7 8 8-7 1-8 8-1-7-8-8 7-1 8-8z" fill="#fff"/></svg>
            </div>
        </div>

        <!-- Side rail -->
        <div class="relative flex flex-col items-center w-[76px] pt-[26px] border-l border-[#dadce0]">
            <svg class="w-[26px] h-[25px]" viewBox="0 0 26 25"><path d="M0 0h20v5H5v15H0z" fill="#4285f4"/><path d="M20 0h6v5h-6z" fill="#1967d2"/><path d="M20 5h6v15h-6z" fill="#fbbc04"/><path d="M5 20h15v5H5z" fill="#34a853"/><path d="M0 20h5v5H0z" fill="#188038"/><path d="M20 20h6l-6 5z" fill="#ea4335"/><path d="M5 5h15v15H5z" fill="#fff"/><text x="12.7" y="16.5" text-anchor="middle" font-family="Roboto" font-size="11" font-weight="700" fill="#4285f4">31</text></svg>
            <svg class="w-[26px] h-[26px] mt-[50px]" viewBox="0 0 26 26"><rect width="26" height="26" rx="2" fill="#fbbc04"/><circle cx="13" cy="11.5" r="5.5" fill="#fff"/><path d="M10 14h6v3.5h-6zM10 18.7h6v2h-6z" fill="#fff"/></svg>
            <svg class="w-[24px] h-[23px] mt-[51px]" viewBox="0 0 24 23"><circle cx="11.5" cy="11.5" r="9.6" fill="none" stroke="#2684fc" stroke-width="3.6"/><path d="M6.5 10.5l4.3 4.3L20 5.5" fill="none" stroke="#2684fc" stroke-width="3.6"/><path d="M17 5.5l4-4.2 2.6 2.2-4.2 4.3z" fill="#0066da"/></svg>
            <svg class="w-[26px] h-[25px] mt-[52px]" viewBox="0 0 26 26"><circle cx="13" cy="13" r="13" fill="#1a73e8"/><circle cx="13" cy="9" r="3.2" fill="#fff"/><path d="M6.5 19v-1.5q0-3.8 6.5-3.8t6.5 3.800V19z" fill="#fff"/></svg>
            <svg class="w-[17px] h-[23px] mt-[51px]" viewBox="0 0 17 23"><path d="M8.5 0A8.5 8.5 0 0 0 2 3l4 3.5 5-6q-1.200-.5-2.500-.5z" fill="#4285f4"/><path d="M2 3Q0 5.500 0 8.500q0 2 .9 3.700L6.500 6.500z" fill="#ea4335"/><path d="M.9 12.200Q2 14.500 4.300 17l8-9.500-3-2z" fill="#fbbc04"/><path d="M16 4.700q1 1.800 1 3.800 0 3.500-3.500 7.500-3.500 4.200-5 7-1.500-3-4.200-6z" fill="#34a853"/><path d="M11 .4q3.500 1.200 5 4.300L10.500 11 6 6.500z" fill="#4285f4"/><circle cx="8.5" cy="8.5" r="3.2" fill="#fff"/></svg>
            <div class="w-[27px] h-px mt-[48px] bg-[#dadce0]"></div>
            <svg class="w-[17px] h-[17px] mt-[52px]" viewBox="0 0 17 17"><path d="M8.5 0v17M0 8.5h17" stroke="#777" stroke-width="2"/></svg>
            <svg class="w-[8px] h-[13px] mt-auto mb-[29px]" viewBox="0 0 8 13"><path d="M1 .8l5.5 5.7L1 12.2" fill="none" stroke="#5f6368" stroke-width="2"/></svg>
        </div>
    </div>

    <!-- Taskbar -->
    <div class="flex items-center h-[46px] bg-linear-to-r from-[#33271f] via-[#32241f] to-[#2b201e]">
        <svg class="w-[24px] h-[24px] ml-[15px]" viewBox="0 0 24 24" fill="#fff"><path d="M0 3.4L10 2v9.5H0zM11 1.8L24 0v11.5H11zM0 12.5h10V22L0 20.6zM11 12.5h13V24l-13-1.8z"/></svg>
        <svg class="w-[25px] h-[25px] ml-[30px]" viewBox="0 0 25 25"><circle cx="15.5" cy="9" r="8" fill="none" stroke="#fff" stroke-width="1.6"/><path d="M9.5 14.5L.8 24" stroke="#fff" stroke-width="1.6"/></svg>
        <svg class="w-[25px] h-[24px] ml-[29px]" viewBox="0 0 25 24"><path d="M.7 0v4h15V0M.7 24v-4h15v4M.7 7h15v10H.7zM22.5 0v6M22.5 12v12" fill="none" stroke="#fff" stroke-width="1.4"/><path d="M21 7.5h3v3h-3z" fill="#fff"/></svg>
        <svg class="w-[25px] h-[25px] ml-[34px]" viewBox="0 0 25 25"><circle cx="12.5" cy="12.5" r="12.5" fill="#1278d0"/><path d="M.3 11A12.5 12.5 0 0 1 25 12.5q0 5.5-6 5.5-4.5 0-4-2.5 1.5-1 1.5-3.5Q15.5 6.5 8.5 6.5 3 7 .3 11z" fill="#35c1d8"/><path d="M14 .1Q25 2 25 12.5q0 5.5-6 5.5-4.5 0-4-2.5 6-6-1-15.4z" fill="#56d364"/><path d="M9 12q-2 7 4 10 5 2 9.5-1.2A12.5 12.5 0 0 1 12 25Q4 22 5.5 15 6.5 12 9 12z" fill="#0d4b91"/></svg>
        <svg class="w-[24px] h-[25px] ml-[32px]" viewBox="0 0 24 25"><path d="M5.5 13.5h15.300q.3-7.500-7-7.500t-7.800 7.500 7.500 8q5 0 7-4" fill="none" stroke="#4cc3f5" stroke-width="4.400"/><path d="M2 23Q-2 19 6 9.500 15 0 20 1q3 .8.5 6" fill="none" stroke="#f5bd1a" stroke-width="2"/></svg>
        <div class="relative flex items-center justify-center w-[55px] h-full ml-[17px] bg-[#5a4e4c]">
            <svg class="w-[23px] h-[23px]" viewBox="0 0 24 24"><path d="M12 12L1.600 6a12 12 0 0 1 20.800 0z" fill="#db4437"/><path d="M12 12l10.400-6A12 12 0 0 1 12 24z" fill="#ffcd40"/><path d="M12 12v0l2 5-4 6.800A12 12 0 0 1 1.600 6z" fill="#0f9d58"/><path d="M10 23.800L16.500 13 22 8 12 24z" fill="#ffcd40"/><circle cx="12" cy="12" r="5.6" fill="#fff"/><circle cx="12" cy="12" r="4.4" fill="#4285f4"/></svg>
            <div class="absolute bottom-0 left-0 w-full h-[3px] bg-[#ffc9a3]"></div>
        </div>
        <svg class="w-[24px] h-[24px] ml-[17px]" viewBox="0 0 24 24"><circle cx="12" cy="12" r="12" fill="#1f4fa3"/><path d="M3 3Q12-2 20 4q5 6 3 13-3-6-9-10T3 3z" fill="#4a9ae0"/><path d="M1 8.500l11-2 6 4-1 8-10 2z" fill="#f3f3f3"/><path d="M1 8.500l9 6 8-4" fill="none" stroke="#9aa4b5"/></svg>
        <div class="relative flex items-center justify-center w-[43px] h-full ml-[24px]">
            <svg class="w-[22px] h-[20px]" viewBox="0 0 22 20"><path d="M0 0h9l2 3H0z" fill="#e8a60c"/><path d="M0 3h22v16H0z" fill="#ffd45c"/><path d="M4 20v-8.500q0-1.500 1.500-1.500h11q1.500 0 1.500 1.500V20h-4v-5H8v5z" fill="#3a9be8"/></svg>
            <div class="absolute bottom-0 left-0 w-full h-[3px] bg-[#ffc9a3]"></div>
        </div>

        <!-- Tray -->
        <svg class="w-[24px] h-[24px] ml-[720px]" viewBox="0 0 24 24"><circle cx="12" cy="12" r="12" fill="#ff7800"/><path d="M9 3q2.500-1.500 4 1l8 15q-1 2-3 0L9 6.500Q8 4.500 9 3zM5 9.500Q7 8 8.500 10l7.500 9q-1 1.500-2.500.5L5.500 12.500Q4 11 5 9.500zM2.500 16q1-1.800 3-1l6 4q-.5 1.500-2 1.200L3.500 18.500Q2 17.800 2.500 16z" fill="#fff"/></svg>
        <svg class="w-[25px] h-[24px] ml-[23px]" viewBox="0 0 25 24"><path d="M2 7l4-5h9l3-2 6 2v17l-5 3-4-6-11-3z" fill="#222"/><path d="M3 7l4-4h8l4-2 4 2v15l-4 3-3-6-12-4z" fill="#dcdcdc"/><path d="M7 5l5 4M15 4l6 3M17 10v8M3 9l13 3" stroke="#777" stroke-width="1.3"/><circle cx="12" cy="8" r="1.3" fill="#2b35ff"/><path d="M1 19l9-5 1.500 1.200L1 21z" fill="#1ed02c"/><path d="M1 21l10.500-5.800 1 1L1 23z" fill="#e22"/><path d="M1 23l11.500-6.800 1 1L4 24z" fill="#22f"/></svg>
        <svg class="w-[24px] h-[25px] ml-[24px]" viewBox="0 0 24 25"><path d="M0 10h24v13H0z" fill="#d5d5d5" stroke="#111"/><path d="M3 13h18M3 16h18M3 19h18M6 12v9M10 12v9M14 12v9M18 12v9" stroke="#222" stroke-width="1.2"/><path d="M4 8V5M8 8V5M12 8V5M15 8V4" stroke="#555"/><path d="M17 0v5M15 2.500h4" stroke="#a8a800" stroke-width="1.500"/></svg>
        <svg class="w-[17px] h-[24px] ml-[29px]" viewBox="0 0 17 24" fill="none" stroke="#fff" stroke-width="1.4"><path d="M1 3q7-4 14 0M1 21q7 4 14 0M1 6.500h9v11H1zM10 11l5.500-3v8L10 13z"/></svg>
        <svg class="w-[24px] h-[20px] ml-[27px]" viewBox="0 0 24 20"><path d="M5 20q-5 0-5-5t5-5.500Q5.500 0 12 0t7 9.500q5 .5 5 5.500t-5 5z" fill="#fff"/><path d="M8 11.500q4 4 8 0" fill="none" stroke="#2a7bea" stroke-width="2"/></svg>
        <svg class="w-[25px] h-[25px] ml-[23px]" viewBox="0 0 25 25"><path d="M11.500 0q5 3.500 11 3.500v8q0 8.500-11 12.500Q.5 20 .5 11.500v-8q6 0 11-3.500z" fill="#fff"/><path d="M11.500 1v22M1 11h21" stroke="#2f2320" stroke-width="1.2"/><circle cx="18" cy="18" r="6.8" fill="#10893e"/><path d="M14.800 18l2.300 2.400 4.200-4.600" fill="none" stroke="#fff" stroke-width="1.6"/></svg>
        <svg class="w-[20px] h-[19px] ml-[27px] mt-[5px]" viewBox="0 0 20 19" fill="none" stroke="#fff" stroke-width="1.4"><path d="M.8 19Q2 2 19 1" stroke="#b9b3b1"/><path d="M5.500 19Q6.500 7 19 6M10 19q1-7 9-8"/><path d="M14.500 19q.5-3.500 4.500-4v4z" fill="#fff" stroke="none"/></svg>
        <svg class="w-[25px] h-[18px] ml-[24px]" viewBox="0 0 25 18"><path d="M8 5h15v12H7v-6" fill="none" stroke="#fff" stroke-width="1.5"/><path d="M10 7h11v8H10zM23.500 9H25v4h-1.500zM0 3h7v4.500q-1 2-2.500 2V14H3V9.500Q.5 9 0 7.500zM1 0h1.500v3H1zM5 0h1.500v3H5z" fill="#fff"/></svg>
        <svg class="w-[21px] h-[18px] ml-[25px]" viewBox="0 0 21 18" fill="none" stroke="#fff" stroke-width="1.4"><path d="M1 6h3l5-5v16l-5-5H1zM13 5.500l7 7M20 5.500l-7 7"/></svg>
        <svg class="w-[24px] h-[24px] ml-[26px]" viewBox="0 0 24 24"><path d="M22.500 7.500Q20.500 1.500 15 3.500T10 12t5 8.500 8-3.500" fill="none" stroke="#c8392e" stroke-width="6"/><path d="M14 0l2 1-5 12-3-1z" fill="#3b82c4"/><path d="M6 10l6 4-3 9q-5 2-9-4 5-3 6-9z" fill="#f0c592"/></svg>
        <svg class="w-[24px] h-[21px] ml-[24px]" viewBox="0 0 24 21" fill="#fff"><path d="M6 0l6 3.800-6 3.900L0 3.800zM18 0l6 3.800-6 3.900-6-3.900zM6 7.700l6 3.800-6 3.900-6-3.900zM18 7.700l6 3.800-6 3.900-6-3.900zM12 13.200l5.500 3.600L12 20.500l-5.500-3.700z"/></svg>
        <svg class="w-[24px] h-[16px] ml-[24px]" viewBox="0 0 24 16"><path d="M4 16q-4-1-4-4.500T4 7q1-7 8-7t8 6q4 .5 4 5t-4 5z" fill="#b9b5b3"/><path d="M4 16L15 7q3-1.500 5-.5 4 .5 4 5t-4 4.500z" fill="#f5f5f5"/></svg>
        <svg class="w-[22px] h-[22px] ml-[26px]" viewBox="0 0 22 22" fill="none" stroke="#fff" stroke-width="1.5"><path d="M9 16L14 2.500q1-2 2.500-1T17 4l-5 13.500-4 3.500zM8 10q-7 1-7 6t6 4M14 13q4-4 4-1.500t3-1.500"/></svg>
        <div class="w-[43px] ml-[23px] text-[18px] tracking-[-0.5px] text-white font-['Open_Sans',sans-serif]">14:58</div>
        <svg class="w-[25px] h-[24px] ml-[27px]" viewBox="0 0 25 24"><path d="M.8.8h23.400v17.400H16l-3.500 4.300L9 18.200H.8z" fill="none" stroke="#fff" stroke-width="1.5"/></svg>
        <div class="w-px h-full ml-auto mr-[6px] bg-[#7a7270]"></div>
    </div>

    <script>
        const columns = [
            ['A', 136], ['B', 136], ['C', 72], ['D', 72], ['E', 72], ['F', 72], ['G', 72],
            ['H', 72], ['I', 72], ['J', 136], ['K', 136], ['L', 136], ['M', 136], ['', 41]
        ];
        const data = {
            1: { I: 'max' },
            2: { C: 7, D: 7, E: 7, F: 4, G: 4, H: 6, I: 7 },
            3: { C: 5, D: 6, E: 2, F: 4, G: 4, H: 5, I: 6 },
            4: { C: 6, D: 4, E: 1, F: 9, G: 5, H: 1, I: 9 },
            5: { C: 6, D: 6, E: 5, F: 2, G: 2, H: 0, I: 6 }
        };
        const inRange = (col, row) => col >= 'C' && col <= 'H' && row >= 2 && row <= 5;

        // Column headers
        document.getElementById('colHeads').innerHTML =
            '<div class="relative shrink-0 w-[62px] h-[32px] bg-white border-r border-b border-[#c0c0c0]"><div class="absolute right-0 top-0 w-[5px] h-[30px] bg-[#bcbcbc]"></div><div class="absolute left-0 top-[25px] w-[61px] h-[5px] bg-[#bcbcbc]"></div></div>' +
            columns.map(([name, width]) => `
                <div class="flex items-center justify-center shrink-0 h-[32px] border-r border-b border-[#c0c0c0] text-[14.5px] text-[#5f6368] ${name >= 'C' && name <= 'H' ? 'bg-[#e8eaed]' : 'bg-[#f8f9fa]'}" style="width: ${width}px">${name}</div>
            `).join('');

        // Rows
        let html = '';
        for (let row = 1; row <= 22; row++) {
            html += `<div class="flex h-[28px]">
                <div class="flex items-center justify-center shrink-0 w-[62px] pt-px leading-none border-r border-b border-[#c0c0c0] text-[14.5px] text-[#5f6368] ${row >= 2 && row <= 5 ? 'bg-[#e8eaed]' : 'bg-[#f8f9fa]'}">${row}</div>`;
            for (const [col, width] of columns) {
                const value = data[row] ? data[row][col] : undefined;
                let color = 'border-[#e2e3e3]';
                if (inRange(col, row)) {
                    color = value === data[row].I ? 'bg-[#a5d4cc] border-[#93c4bc]' : 'bg-[#e6effd] border-[#cbd5e4]';
                }
                html += `<div class="flex items-center justify-center shrink-0 pt-[2px] border-r border-b text-[17.5px] text-black font-['Liberation_Sans',sans-serif] ${color}" style="width: ${width}px">${value ?? ''}</div>`;
            }
            html += '</div>';
        }
        document.getElementById('rows').innerHTML = html;
    </script>
</body>
</html>
